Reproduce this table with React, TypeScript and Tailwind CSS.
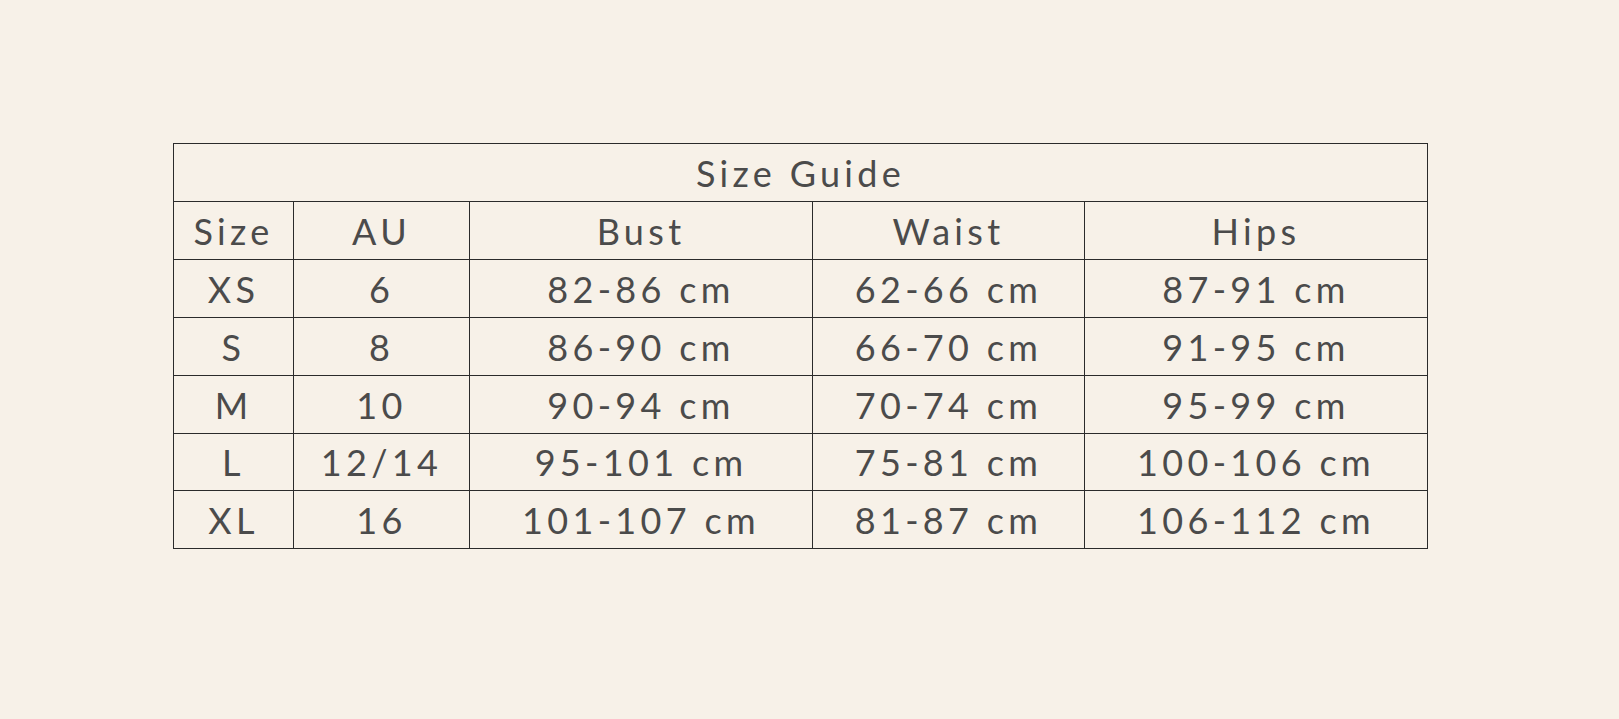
import React from "react";

const rows = [
  ["XS", "6", "82-86 cm", "62-66 cm", "87-91 cm"],
  ["S", "8", "86-90 cm", "66-70 cm", "91-95 cm"],
  ["M", "10", "90-94 cm", "70-74 cm", "95-99 cm"],
  ["L", "12/14", "95-101 cm", "75-81 cm", "100-106 cm"],
  ["XL", "16", "101-107 cm", "81-87 cm", "106-112 cm"],
];

const headers = ["Size", "AU", "Bust", "Waist", "Hips"];

export default function App() {
  return (
    <div
      className="w-[1619px] h-[719px] bg-[#f7f1e8] pt-[143px] pl-[173px] text-[#4b4b4b]"
      style={{ fontFamily: "Lato, 'Open Sans', sans-serif" }}
    >
      <table className="border-collapse table-fixed w-[1254px] text-[36px] tracking-[0.12em]">
        <colgroup>
          <col className="w-[120px]" />
          <col className="w-[176px]" />
          <col className="w-[343px]" />
          <col className="w-[272px]" />
          <col className="w-[343px]" />
        </colgroup>
        <tbody>
          <tr>
            <td colSpan={5} className="border border-[#2b2b2b] h-[58px] p-0 text-center align-middle leading-none">
              Size Guide
            </td>
          </tr>
          <tr>
            {headers.map((h) => (
              <td key={h} className="border border-[#2b2b2b] h-[58px] p-0 text-center align-middle leading-none">
                {h}
              </td>
            ))}
          </tr>
          {rows.map((r, ri) => (
            <tr key={r[0]}>
              {r.map((c, i) => (
                <td
                  key={i}
                  className={
                    ri === 3
                      ? "border border-[#2b2b2b] h-[57px] p-0 text-center align-middle leading-none whitespace-nowrap"
                      : "border border-[#2b2b2b] h-[58px] p-0 text-center align-middle leading-none whitespace-nowrap"
                  }
                >
                  {c}
                </td>
              ))}
            </tr>
          ))}
        </tbody>
      </table>
    </div>
  );
}
